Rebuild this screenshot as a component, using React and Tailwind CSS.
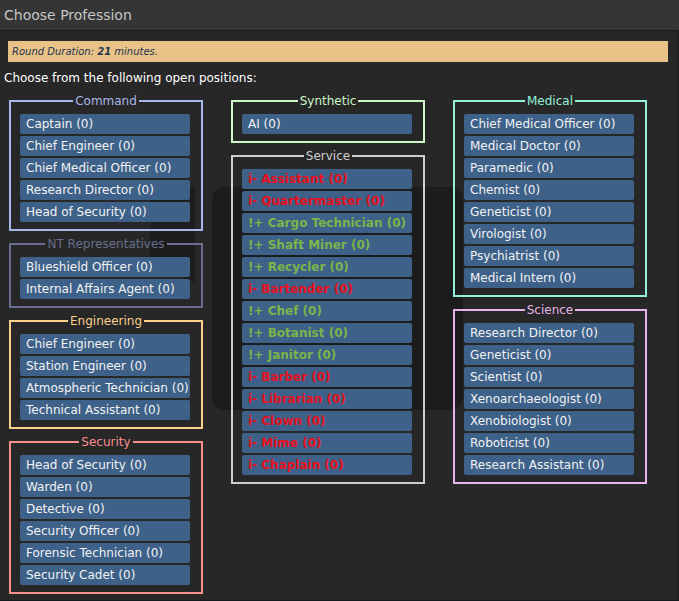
const groups = {
  left: [
    {
      title: "Command",
      color: "border-[#a6b8ea]",
      text: "text-[#a6b8ea]",
      jobs: ["Captain", "Chief Engineer", "Chief Medical Officer", "Research Director", "Head of Security"],
    },
    {
      title: "NT Representatives",
      color: "border-[#696d8e]",
      text: "text-[#696d8e]",
      jobs: ["Blueshield Officer", "Internal Affairs Agent"],
    },
    {
      title: "Engineering",
      color: "border-[#fbd08c]",
      text: "text-[#fbd08c]",
      jobs: ["Chief Engineer", "Station Engineer", "Atmospheric Technician", "Technical Assistant"],
    },
    {
      title: "Security",
      color: "border-[#f78e8e]",
      text: "text-[#f78e8e]",
      jobs: ["Head of Security", "Warden", "Detective", "Security Officer", "Forensic Technician", "Security Cadet"],
    },
  ],
  middle: [
    {
      title: "Synthetic",
      color: "border-[#cdf7c6]",
      text: "text-[#cdf7c6]",
      jobs: ["AI"],
    },
    {
      title: "Service",
      color: "border-[#cfcfcf]",
      text: "text-[#cfcfcf]",
      service: true,
      jobs: [
        ["Assistant", false],
        ["Quartermaster", false],
        ["Cargo Technician", true],
        ["Shaft Miner", true],
        ["Recycler", true],
        ["Bartender", false],
        ["Chef", true],
        ["Botanist", true],
        ["Janitor", true],
        ["Barber", false],
        ["Librarian", false],
        ["Clown", false],
        ["Mime", false],
        ["Chaplain", false],
      ],
    },
  ],
  right: [
    {
      title: "Medical",
      color: "border-[#93f1db]",
      text: "text-[#93f1db]",
      jobs: ["Chief Medical Officer", "Medical Doctor", "Paramedic", "Chemist", "Geneticist", "Virologist", "Psychiatrist", "Medical Intern"],
    },
    {
      title: "Science",
      color: "border-[#e6b4e6]",
      text: "text-[#e6b4e6]",
      jobs: ["Research Director", "Geneticist", "Scientist", "Xenoarchaeologist", "Xenobiologist", "Roboticist", "Research Assistant"],
    },
  ],
}

function JobButton({ children, className = "text-[#f2f2f2]" }) {
  return (
    <div className={`w-[170px] h-[20px] rounded-[2px] bg-[#3e6189] pl-[6px] text-[12px] leading-[20px] whitespace-nowrap ${className}`}>
      {children}
    </div>
  )
}

function Group({ group }) {
  return (
    <fieldset className={`border-2 ${group.color} px-[9px] pt-[6px] pb-[7px] mb-[6px]`}>
      <legend className={`mx-auto px-[2px] text-[12px] leading-[14px] ${group.text}`}>{group.title}</legend>
      <div className="flex flex-col gap-[2px]">
        {group.service
          ? group.jobs.map(([name, open]) => (
              <JobButton
                key={name}
                className={`font-bold ${open ? "text-[#79b54a]" : "text-[#e8101c]"}`}
              >
                {open ? "!+ " : "i- "}
                {name} (0)
              </JobButton>
            ))
          : group.jobs.map((name, i) => <JobButton key={name + i}>{name} (0)</JobButton>)}
      </div>
    </fieldset>
  )
}

export default function App() {
  return (
    <div className="w-[679px] h-[601px] bg-[#272727] font-['DejaVu_Sans',sans-serif] flex flex-col overflow-hidden">
      {/* Title bar */}
      <div className="h-[31px] shrink-0 bg-[#353535] border-b border-[#1c1c1c] pl-[4px] text-[14px] leading-[30px] text-[#c6c6c6]">
        Choose Profession
      </div>

      <div className="relative flex-1 border-r-2 border-[#1f1f1f]">
        {/* NT logo watermark */}
        <svg className="absolute left-[150px] top-[156px]" width="320" height="260" viewBox="0 0 320 260">
          <path d="M0 0 H45 V95 L0 80 Z" fill="#1d1d1d" />
          <rect x="62" y="0" width="251" height="223" rx="12" fill="#1c1c1c" />
        </svg>

        <div className="relative">
          {/* Round duration */}
          <div className="mt-[10px] ml-[8px] w-[660px] h-[21px] bg-[#e8c286] pl-[4px] text-[10px] leading-[22px] italic text-[#1f3452]">
            Round Duration: <b>21</b> minutes.
          </div>

          <div className="mt-[8px] pl-[4px] text-[12px] leading-[16px] text-white">
            Choose from the following open positions:
          </div>

          <div className="mt-[8px] pl-[9px] grid grid-cols-[194px_194px_194px] gap-x-[28px] items-start">
            <div>
              {groups.left.map((g) => (
                <Group key={g.title} group={g} />
              ))}
            </div>
            <div>
              {groups.middle.map((g) => (
                <Group key={g.title} group={g} />
              ))}
            </div>
            <div>
              {groups.right.map((g) => (
                <Group key={g.title} group={g} />
              ))}
            </div>
          </div>
        </div>
      </div>

      {/* strip of desktop under the window */}
      <div className="h-[5px] shrink-0 bg-[#14171c]" />
    </div>
  )
}
